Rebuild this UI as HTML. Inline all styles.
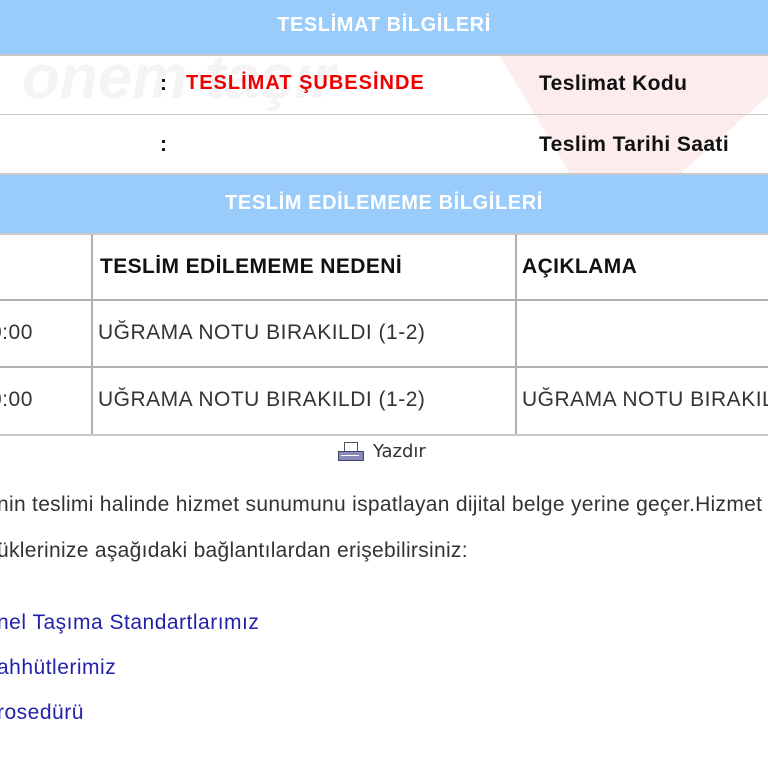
<!DOCTYPE html>
<html><head><meta charset="utf-8"><style>
body{margin:0;width:768px;height:768px;overflow:hidden;background:#fff;font-family:"Liberation Sans",Arial,sans-serif;position:relative}
.a{position:absolute;white-space:nowrap}
.hd{position:absolute;left:0;width:768px;background:#99cbfb;color:#fff;font-weight:bold;font-size:20px;letter-spacing:0.6px;text-align:center}
.ln{position:absolute;left:0;width:768px;height:2px;background:#c8c8c8}
.vl{position:absolute;width:2px;background:#b0b0b0}
.t{font-size:21px;letter-spacing:0.5px;color:#333}
.b{font-weight:bold;color:#111;font-size:21px;letter-spacing:0.4px}
.lk{color:#2222aa;font-size:21px;letter-spacing:0.5px}
</style></head><body>
<div class="hd" style="top:0;height:54px;line-height:50px">TESLİMAT BİLGİLERİ</div>
<div class="ln" style="top:54px"></div>
<svg class="a" style="left:0;top:56px" width="768" height="118"><polygon points="500,0 768,0 768,40 680,118 570,118" fill="#fcecec"/></svg>
<div class="a" style="left:22px;top:42px;font-size:62px;font-style:italic;color:#f4f4f4;font-weight:bold">onem taşır</div>
<div class="a b" style="left:160px;top:72px">:</div>
<div class="a" style="left:186px;top:72px;font-size:20px;letter-spacing:1px;font-weight:bold;color:#e00">TESLİMAT ŞUBESİNDE</div>
<div class="a b" style="left:539px;top:72px">Teslimat Kodu</div>
<div class="ln" style="top:114px;height:1px"></div>
<div class="a b" style="left:160px;top:133px">:</div>
<div class="a b" style="left:539px;top:133px">Teslim Tarihi Saati</div>
<div class="ln" style="top:173px"></div>
<div class="hd" style="top:175px;height:58px;line-height:56px">TESLİM EDİLEMEME BİLGİLERİ</div>
<div class="ln" style="top:233px"></div>
<div class="vl" style="left:91px;top:235px;height:200px"></div>
<div class="vl" style="left:515px;top:235px;height:200px"></div>
<div class="ln" style="top:299px;background:#b0b0b0"></div>
<div class="ln" style="top:366px;background:#b0b0b0"></div>
<div class="ln" style="top:434px"></div>
<div class="a b" style="left:100px;top:255px">TESLİM EDİLEMEME NEDENİ</div>
<div class="a b" style="left:522px;top:255px">AÇIKLAMA</div>
<div class="a t" style="left:-10px;top:321px">0:00</div>
<div class="a t" style="left:98px;top:321px">UĞRAMA NOTU BIRAKILDI (1-2)</div>
<div class="a t" style="left:-10px;top:388px">0:00</div>
<div class="a t" style="left:98px;top:388px">UĞRAMA NOTU BIRAKILDI (1-2)</div>
<div class="a t" style="left:522px;top:388px">UĞRAMA NOTU BIRAKILDI</div>
<div class="a" style="left:338px;top:442px;width:26px;height:22px">
<div style="position:absolute;left:6px;top:0;width:12px;height:9px;border:1px solid #556;background:#fff"></div>
<div style="position:absolute;left:0;top:9px;width:24px;height:8px;background:#8a8ab8;border:1px solid #446"></div>
<div style="position:absolute;left:3px;top:13px;width:18px;height:1px;background:#fff"></div>
</div>
<div class="a" style="left:373px;top:441px;font-size:18px;color:#333;font-family:'DejaVu Sans',sans-serif">Yazdır</div>
<div class="a t" style="left:-3px;top:493px;letter-spacing:0.3px">nin teslimi halinde hizmet sunumunu ispatlayan dijital belge yerine geçer.Hizmet</div>
<div class="a t" style="left:-3px;top:539px;letter-spacing:0.3px">üklerinize aşağıdaki bağlantılardan erişebilirsiniz:</div>
<div class="a lk" style="left:-3px;top:611px">nel Taşıma Standartlarımız</div>
<div class="a lk" style="left:-3px;top:656px">ahhütlerimiz</div>
<div class="a lk" style="left:-3px;top:701px">rosedürü</div>
</body></html>
